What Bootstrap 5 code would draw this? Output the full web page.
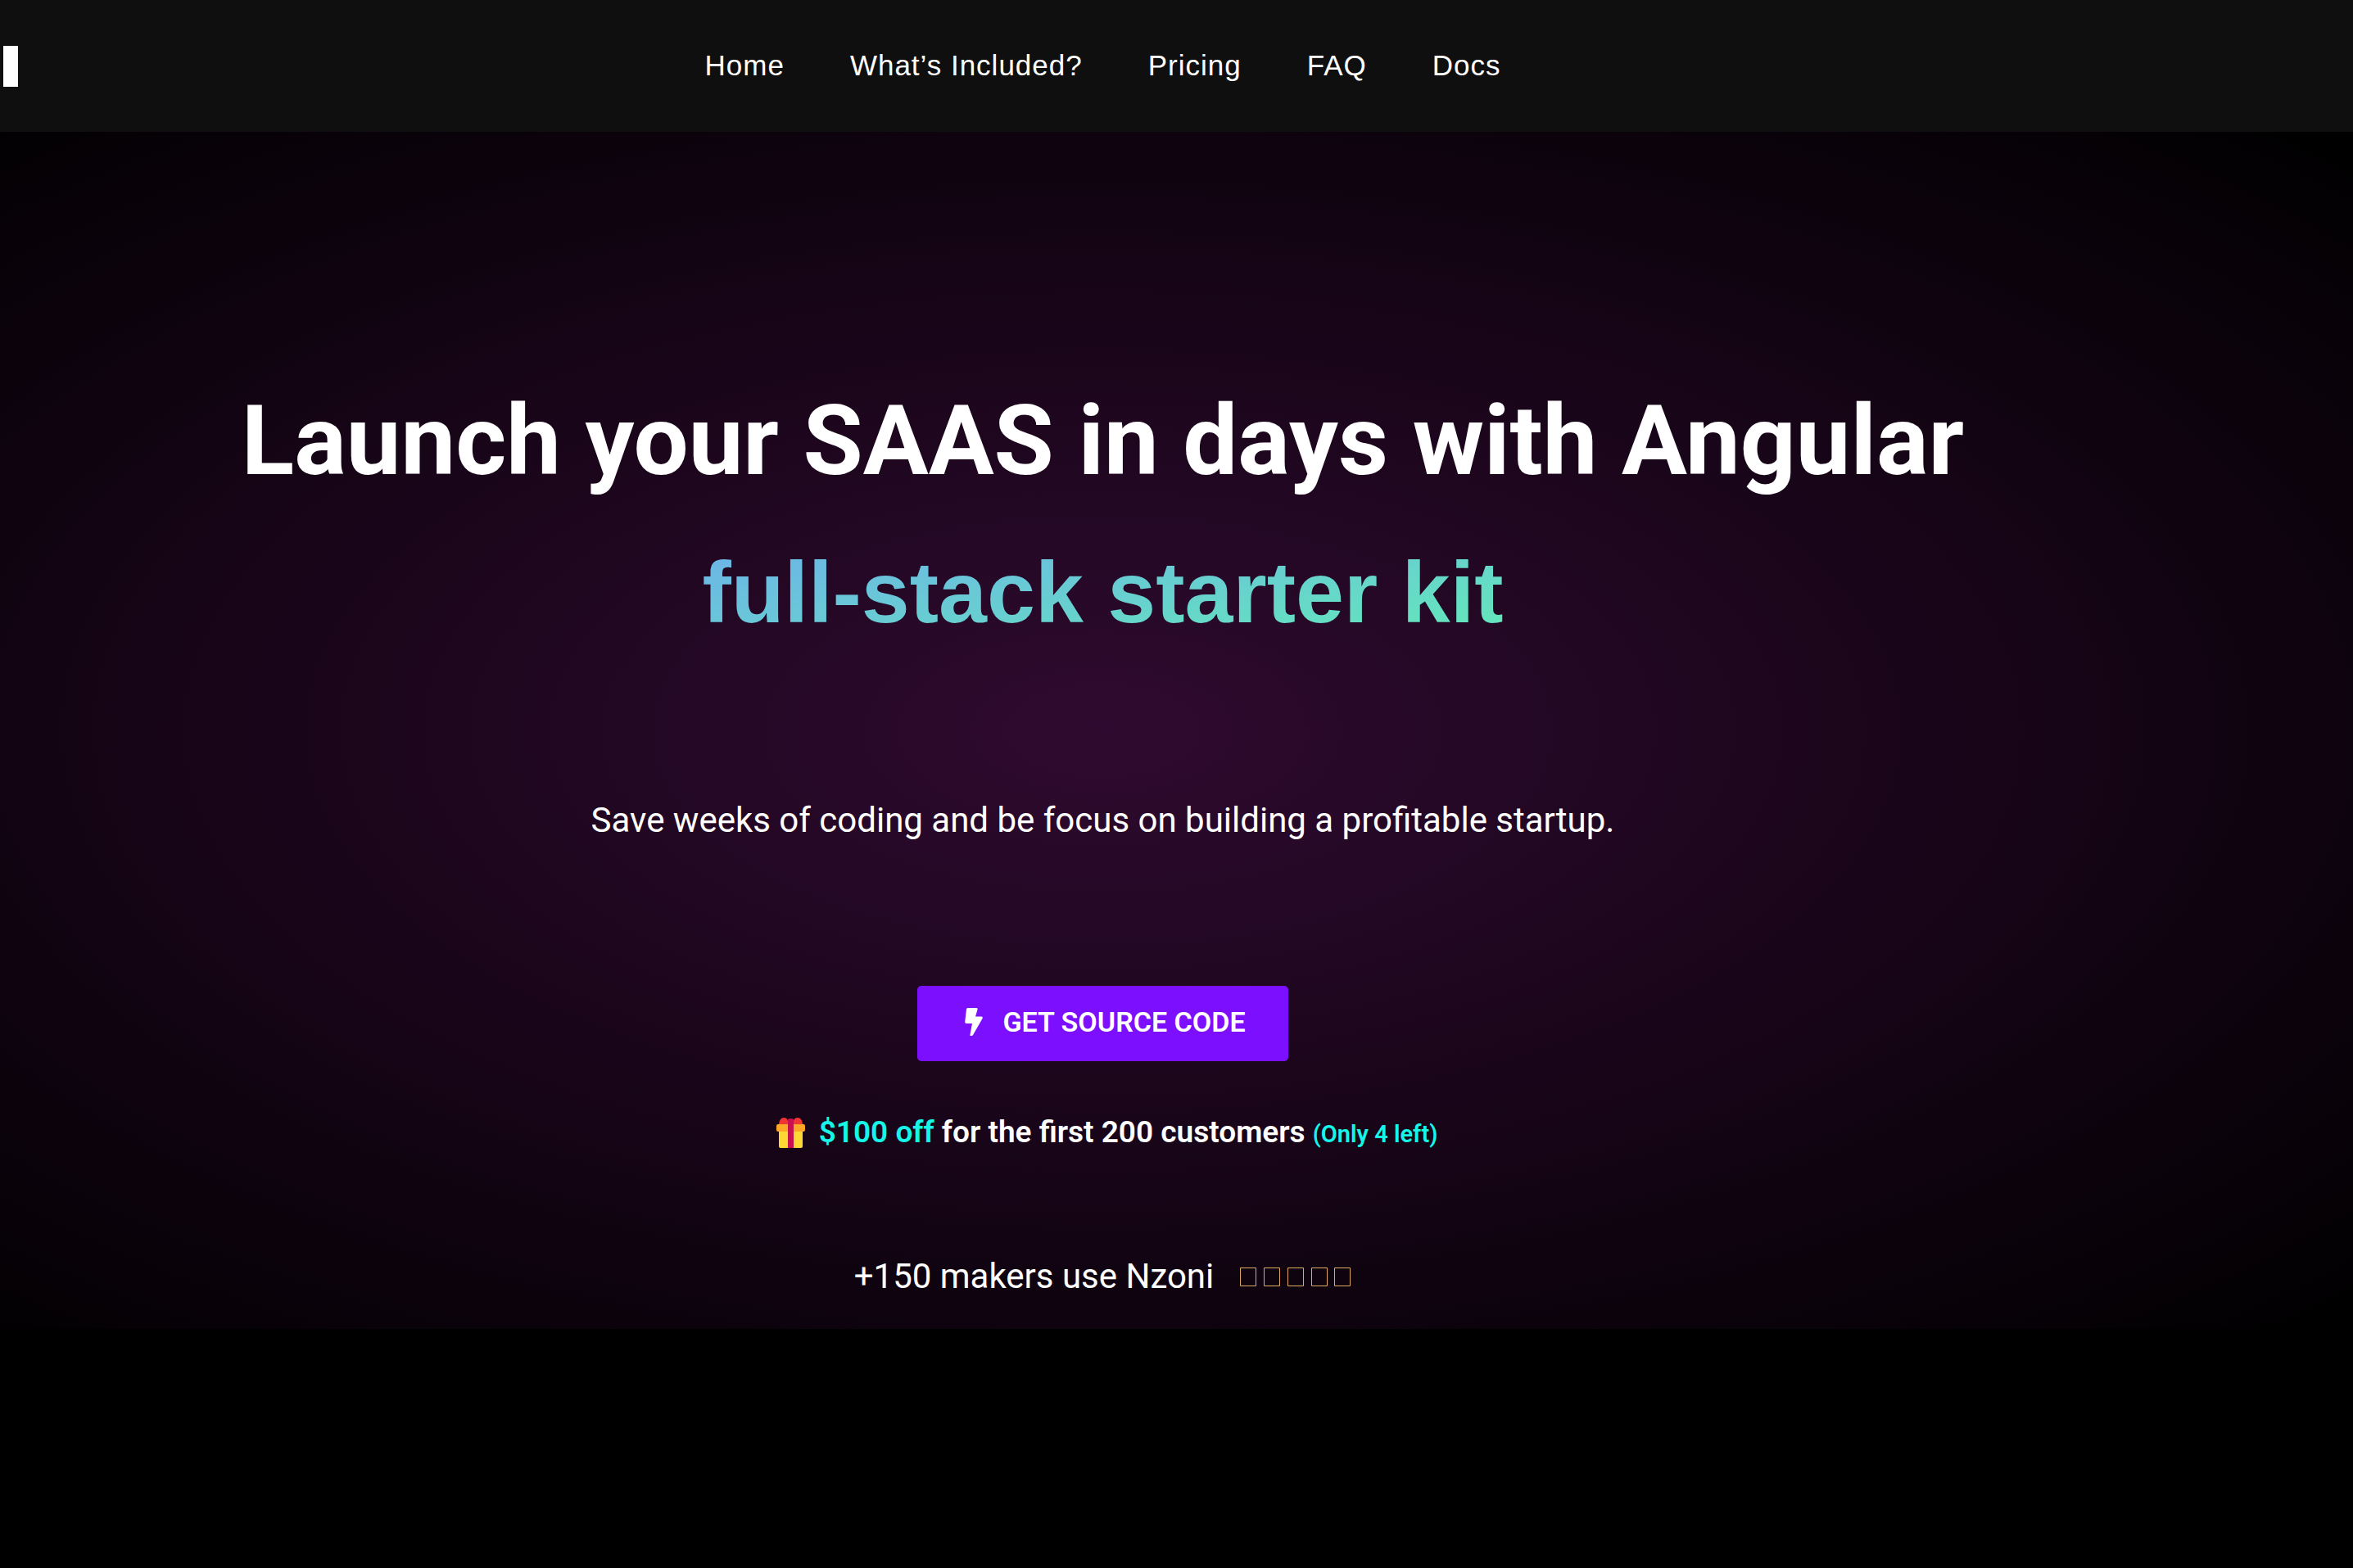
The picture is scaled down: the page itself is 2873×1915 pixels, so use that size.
<!DOCTYPE html>
<html lang="en">
<head>
<meta charset="utf-8">
<meta name="viewport" content="width=device-width, initial-scale=1">
<title>Nzoni – Angular full-stack starter kit</title>
<link rel="stylesheet" href="https://cdn.jsdelivr.net/npm/bootstrap@5.3.0/dist/css/bootstrap.min.css">
<style>
  :root { --side: 180px; }
  body { background: #000; color: #fff; font-family: Roboto, sans-serif; overflow-x: hidden; }
  .site-bar { background: #0f0f0f; height: 161px; padding: 0 calc(var(--side) + 22px) 0 4px; }
  .brand-mark { width: 18px; height: 50px; background: #fff; }
  .site-links { gap: 80px; padding-bottom: 2px; }
  .site-links .nav-link { color: #fff; padding: 0; font: 400 35px/54px "Liberation Sans", Arial, sans-serif; letter-spacing: 1px; }
  .hero {
    padding: 294px var(--side) 32px 0;
    background: radial-gradient(ellipse farthest-corner at calc(50% - 90px) 50%, #2f0a30 0%, #000 100%);
  }
  .hero-title { font-size: 119px; line-height: 168px; font-weight: 700; }
  .hero-kit {
    font: 700 106px/168px "Liberation Sans", Arial, sans-serif;
    background: linear-gradient(to bottom right, #6eaeee, #62eeb4);
    -webkit-background-clip: text; background-clip: text; color: transparent;
    margin-top: 16px;
  }
  .hero-copy { font-size: 42px; line-height: 64px; }
  .intro-copy { margin-top: 163px; }
  .btn-source {
    --bs-btn-color: #fff; --bs-btn-bg: #7d0fff; --bs-btn-hover-color: #fff; --bs-btn-hover-bg: #6c0be0;
    --bs-btn-border-width: 0; --bs-btn-border-radius: 5px;
    margin-top: 170px; height: 92px; padding: 0 52px 4px 58px; gap: 24px;
    font-size: 34px; font-weight: 600; line-height: 44px;
  }
  .offer { margin-top: 58px; padding-left: 10px; gap: 17px; font-size: 37px; line-height: 58px; font-weight: 600; }
  .aqua { color: #15f5e8; }
  .offer small { font-size: 29px; }
  .makers { margin-top: 113px; gap: 32px; }
</style>
</head>
<body>
<header class="site-bar d-flex align-items-center">
  <a href="#" class="brand-mark" aria-label="Nzoni"></a>
  <nav class="flex-grow-1">
    <ul class="nav site-links justify-content-center">
      <li><a class="nav-link" href="#home">Home</a></li>
      <li><a class="nav-link" href="#included">What’s Included?</a></li>
      <li><a class="nav-link" href="#pricing">Pricing</a></li>
      <li><a class="nav-link" href="#faq">FAQ</a></li>
      <li><a class="nav-link" href="#docs">Docs</a></li>
    </ul>
  </nav>
</header>
<main class="hero d-flex flex-column align-items-center text-center" id="home">
  <h1 class="hero-title mb-0">Launch your SAAS in days with Angular</h1>
  <h2 class="hero-kit mb-0">full-stack starter kit</h2>
  <p class="hero-copy intro-copy mb-0">Save weeks of coding and be focus on building a profitable startup.</p>
  <button type="button" class="btn btn-source d-flex align-items-center">
    <svg width="22" height="34" viewBox="0 0 22 34" fill="currentColor" aria-hidden="true"><path d="M3.500 0H14q2 0 1.500 2l-2.500 8.500h7q2.500 0 1.500 2.500L10 33q-.5 1-1.500 1H7.500q-1.500 0-1-1.500L9 19H2Q0 19 .2 17L2 1.500Q2.200 0 3.500 0z"/></svg>
    <span>GET SOURCE CODE</span>
  </button>
  <div class="offer d-flex align-items-center">
    <svg width="35" height="38" viewBox="0 0 35 38" aria-hidden="true">
      <path d="M3 16h29v19q0 2-2 2H5q-2 0-2-2z" fill="#fdd835"/>
      <rect y="8" width="35" height="9" rx="2" fill="#ffa726"/>
      <path d="M3 8Q4 0 9 0q4 0 5 4v4zM32 8Q31 0 26 0q-4 0-5 4v4z" fill="#f13434"/>
      <path d="M14 2q3-2 7 0v35h-7z" fill="#c8104f"/>
    </svg>
    <span><span class="aqua">$100 off</span> for the first 200 customers <small class="aqua">(Only 4 left)</small></span>
  </div>
  <div class="hero-copy makers d-flex align-items-center">
    <span>+150 makers use Nzoni</span>
    <svg width="136" height="23" viewBox="0 0 136 23" fill="none" stroke="#dcab60" role="img" aria-label="5 stars">
      <path d="M.5.500h19v22h-19zM29.500.500h19v22h-19zM58.500.500h19v22h-19zM87.500.500h19v22h-19zM115.500.500h19v22h-19z"/>
    </svg>
  </div>
</main>
<script src="https://cdn.jsdelivr.net/npm/bootstrap@5.3.0/dist/js/bootstrap.bundle.min.js"></script>
</body>
</html>
